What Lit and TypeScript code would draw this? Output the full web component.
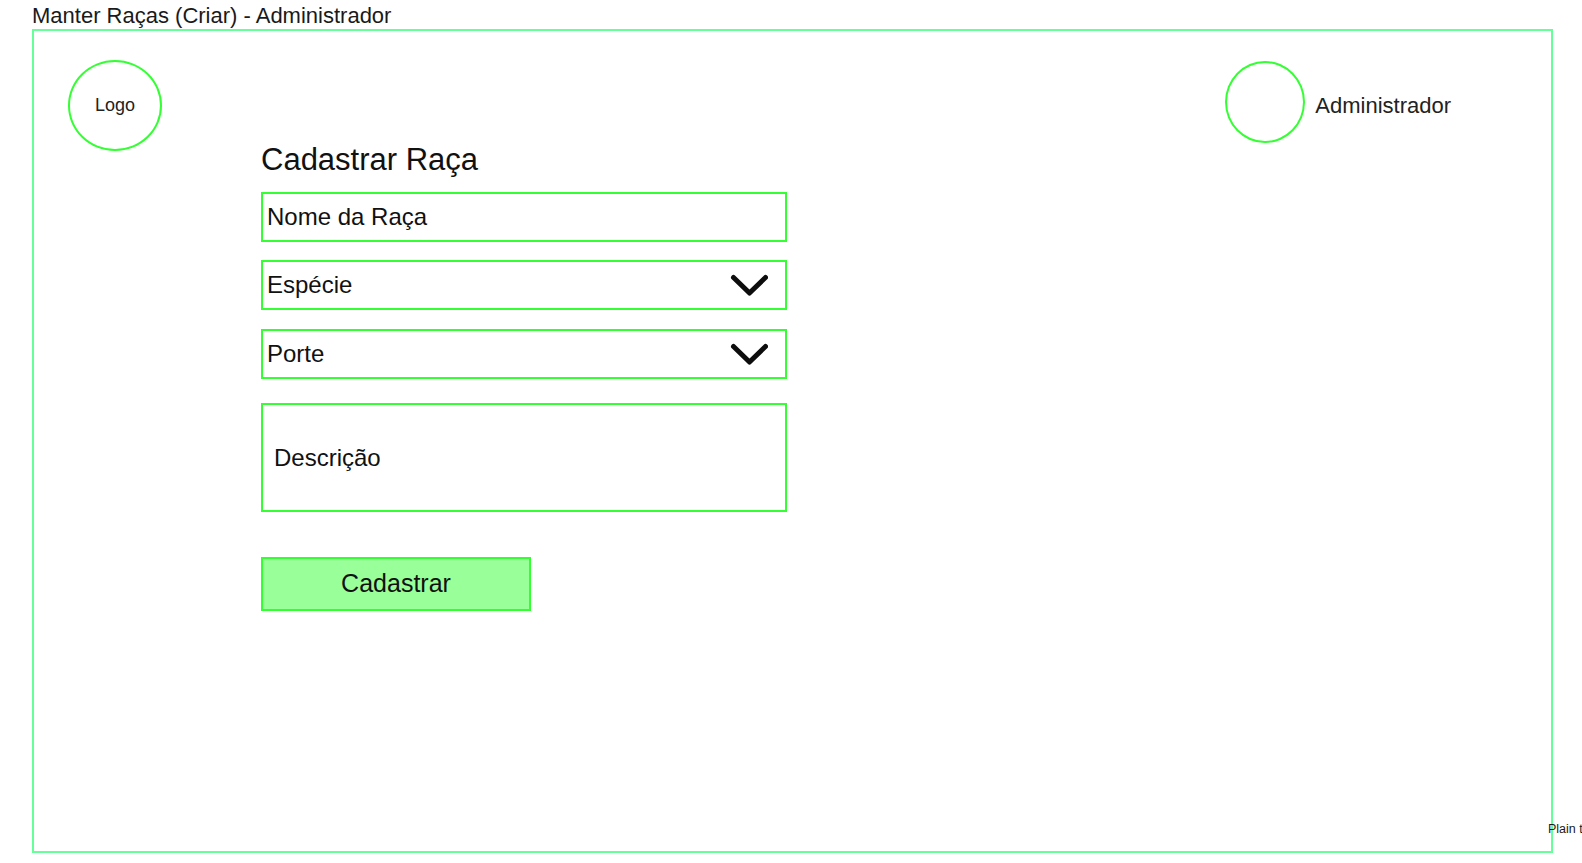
import { LitElement, css, html } from 'lit'
import { customElement } from 'lit/decorators.js'

const chevron = html`
  <svg class="chevron" viewBox="0 0 38 22" width="38" height="22">
    <path d="M3.5 3.5 L19.5 19 L35.5 3.5" fill="none" stroke="#0d0d0d" stroke-width="5" stroke-linecap="round" stroke-linejoin="round"></path>
  </svg>
`

@customElement('app-root')
export class AppRoot extends LitElement {
  render() {
    return html`
      <div class="page-title">Manter Raças (Criar) - Administrador</div>

      <main class="frame">
        <div class="logo">Logo</div>

        <section class="form">
          <h1>Cadastrar Raça</h1>
          <div class="field name">Nome da Raça</div>
          <div class="field especie">Espécie ${chevron}</div>
          <div class="field porte">Porte ${chevron}</div>
          <div class="field description">Descrição</div>
          <div class="submit">Cadastrar</div>
        </section>

        <div class="user">
          <div class="avatar"></div>
          <span>Administrador</span>
        </div>

        <span class="plain">Plain text</span>
      </main>
    `
  }

  static styles = css`
    :host {
      display: block;
      width: 1582px;
      height: 863px;
      overflow: hidden;
      background: #fff;
      color: #1a1a1a;
      font-family: 'Liberation Sans', Arial, sans-serif;
    }

    .page-title {
      height: 29px;
      padding-left: 32px;
      font-size: 22px;
      line-height: 31px;
      white-space: nowrap;
    }

    .frame {
      position: relative;
      display: flex;
      align-items: flex-start;
      box-sizing: border-box;
      width: 1521px;
      height: 824px;
      margin-left: 32px;
      padding: 29px 100px 0 34px;
      border: 2px solid #66ff99;
    }

    .logo {
      display: flex;
      align-items: center;
      justify-content: center;
      flex: none;
      box-sizing: border-box;
      width: 94px;
      height: 91px;
      border: 2px solid #33ff33;
      border-radius: 50%;
      font-size: 18px;
      color: #222;
    }

    .form {
      flex: none;
      width: 526px;
      margin: 82px 0 0 99px;
    }

    h1 {
      margin: 0 0 14px;
      font-size: 31px;
      font-weight: 400;
      line-height: 36px;
      color: #111;
    }

    .field {
      display: flex;
      align-items: center;
      justify-content: space-between;
      box-sizing: border-box;
      height: 50px;
      padding: 0 17px 0 4px;
      border: 2px solid #33ff33;
      font-size: 24px;
      color: #111;
    }

    .especie {
      margin-top: 18px;
    }

    .porte {
      margin-top: 19px;
    }

    .description {
      height: 109px;
      margin-top: 24px;
      padding-left: 11px;
    }

    .submit {
      display: flex;
      align-items: center;
      justify-content: center;
      box-sizing: border-box;
      width: 270px;
      height: 54px;
      margin-top: 45px;
      padding-bottom: 2px;
      border: 2px solid #33ff33;
      background: #99ff99;
      font-size: 25px;
      color: #111;
    }

    .user {
      display: flex;
      align-items: center;
      gap: 10px;
      margin: 1px 0 0 auto;
      font-size: 22px;
      color: #222;
    }

    .avatar {
      box-sizing: border-box;
      width: 80px;
      height: 82px;
      border: 2px solid #33ff33;
      border-radius: 50%;
    }

    .user span {
      position: relative;
      top: 4px;
    }

    .plain {
      position: absolute;
      top: 791px;
      left: 1514px;
      font-size: 12.5px;
      white-space: nowrap;
    }
  `
}
